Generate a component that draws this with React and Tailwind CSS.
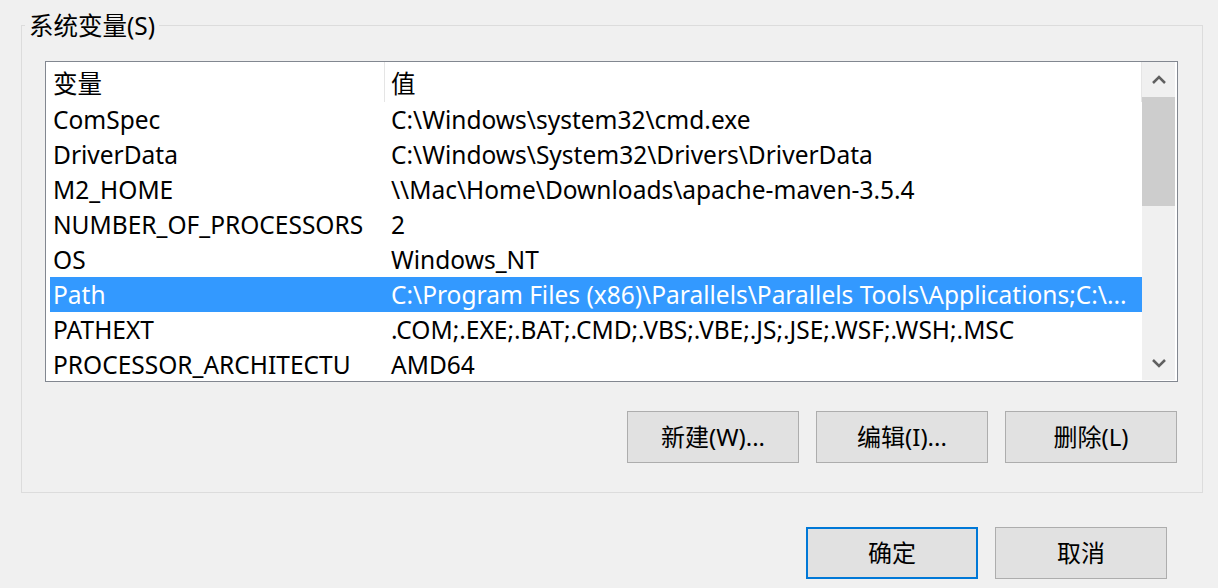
import React from 'react';

// 系统变量列表
const rows = [
  { name: 'ComSpec', value: 'C:\\Windows\\system32\\cmd.exe' },
  { name: 'DriverData', value: 'C:\\Windows\\System32\\Drivers\\DriverData' },
  { name: 'M2_HOME', value: '\\\\Mac\\Home\\Downloads\\apache-maven-3.5.4' },
  { name: 'NUMBER_OF_PROCESSORS', value: '2' },
  { name: 'OS', value: 'Windows_NT' },
  { name: 'Path', value: 'C:\\Program Files (x86)\\Parallels\\Parallels Tools\\Applications;C:\\...', selected: true },
  { name: 'PATHEXT', value: '.COM;.EXE;.BAT;.CMD;.VBS;.VBE;.JS;.JSE;.WSF;.WSH;.MSC' },
  { name: 'PROCESSOR_ARCHITECTU', value: 'AMD64' },
];

const font = { fontFamily: '"Noto Sans", "Noto Sans CJK SC", sans-serif' };

const WinButton = ({ children, primary }) => (
  <button
    className={
      primary
        ? 'w-[172px] h-[52px] bg-[#e1e1e1] border-2 border-[#0078d7] text-[24px] text-black'
        : 'w-[172px] h-[52px] bg-[#e1e1e1] border border-[#adadad] text-[24px] text-black'
    }
  >
    {children}
  </button>
);

const App = () => {
  return (
    <div className="w-[1218px] h-[588px] bg-[#f0f0f0] pl-[21px] pt-[25px] overflow-hidden text-black" style={font}>
      {/* group box */}
      <div className="relative w-[1182px] h-[468px] border border-[#dcdcdc]">
        <span className="absolute left-[3px] top-[-16px] px-[4px] bg-[#f0f0f0] text-[24.5px] leading-[32px]">系统变量(S)</span>

        {/* list view */}
        <div className="ml-[23px] mt-[35px] w-[1133px] h-[321px] border border-[#828790] bg-white flex overflow-hidden">
          <div className="w-[1096px] shrink-0">
            <div className="h-[40px] flex items-center text-[24.5px]">
              <div className="w-[339px] h-full pl-[7px] pt-[4px] flex items-center border-r border-[#e5e5e5]">变量</div>
              <div className="w-[757px] h-full pl-[6px] pt-[4px] flex items-center border-r border-[#e5e5e5]">值</div>
            </div>
            {rows.map((r) => (
              <div
                key={r.name}
                className={
                  r.selected
                    ? 'ml-[4px] w-[1092px] h-[35px] pt-[2px] flex items-center text-[24.5px] bg-[#3399ff] text-white'
                    : 'ml-[4px] w-[1092px] h-[35px] pt-[2px] flex items-center text-[24.5px]'
                }
              >
                <div className="w-[338px] shrink-0 pl-[3px] whitespace-nowrap overflow-hidden">{r.name}</div>
                <div className="flex-1 pl-[3px] whitespace-nowrap overflow-hidden">{r.value}</div>
              </div>
            ))}
          </div>

          {/* scroll bar */}
          <div className="w-[33px] shrink-0 mb-[1px] bg-[#f0f0f0] flex flex-col">
            <div className="h-[35px] flex items-center justify-center">
              <svg width="14" height="10" viewBox="0 0 14 10">
                <path d="M1 8 L7 2 L13 8" fill="none" stroke="#606060" strokeWidth="2.5" />
              </svg>
            </div>
            <div className="h-[109px] bg-[#cdcdcd]" />
            <div className="flex-1" />
            <div className="h-[35px] flex items-center justify-center">
              <svg width="14" height="10" viewBox="0 0 14 10">
                <path d="M1 2 L7 8 L13 2" fill="none" stroke="#606060" strokeWidth="2.5" />
              </svg>
            </div>
          </div>
        </div>

        <div className="mt-[29px] mr-[25px] flex justify-end gap-[17px]">
          <WinButton>新建(W)...</WinButton>
          <WinButton>编辑(I)...</WinButton>
          <WinButton>删除(L)</WinButton>
        </div>
      </div>

      <div className="mt-[34px] w-[1146px] flex justify-end gap-[17px]">
        <WinButton primary>确定</WinButton>
        <WinButton>取消</WinButton>
      </div>
    </div>
  );
};

export default App;
